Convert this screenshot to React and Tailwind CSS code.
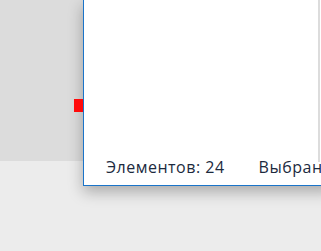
export default function App() {
  return (
    <div
      className="relative w-[321px] h-[251px] overflow-hidden bg-[#ececec]"
      style={{ fontFamily: '"Open Sans", "Noto Sans", sans-serif' }}
    >
      <div className="h-[161px] bg-[#dcdcdc]" />

      {/* window */}
      <div className="absolute left-[83px] top-0 w-[250px] h-[186px] flex flex-col bg-white border-l border-b border-[#1a74c9] shadow-[0_6px_14px_rgba(0,0,0,0.28)]">
        <div className="flex-1 flex">
          <div className="flex-1" />
          <div className="w-[2px] bg-[#dcdcdc] mr-[13px]" />
        </div>
        <div className="h-[23px] flex items-start pl-[22px] text-[16px] leading-[20px] tracking-[0.5px] text-[#1c2a3e] whitespace-nowrap">
          <span className="mt-[-5px]">Элементов: 24</span>
          <span className="ml-[17px] mr-[17px] mt-[-4px] w-px h-[18px] bg-[#ebebeb]" />
          <span className="mt-[-5px]">Выбрано: 0</span>
        </div>
      </div>

      {/* marker */}
      <div className="absolute left-[74px] top-[99px] w-[9px] h-[13px] bg-[#ff0a0a]" />
    </div>
  );
}
